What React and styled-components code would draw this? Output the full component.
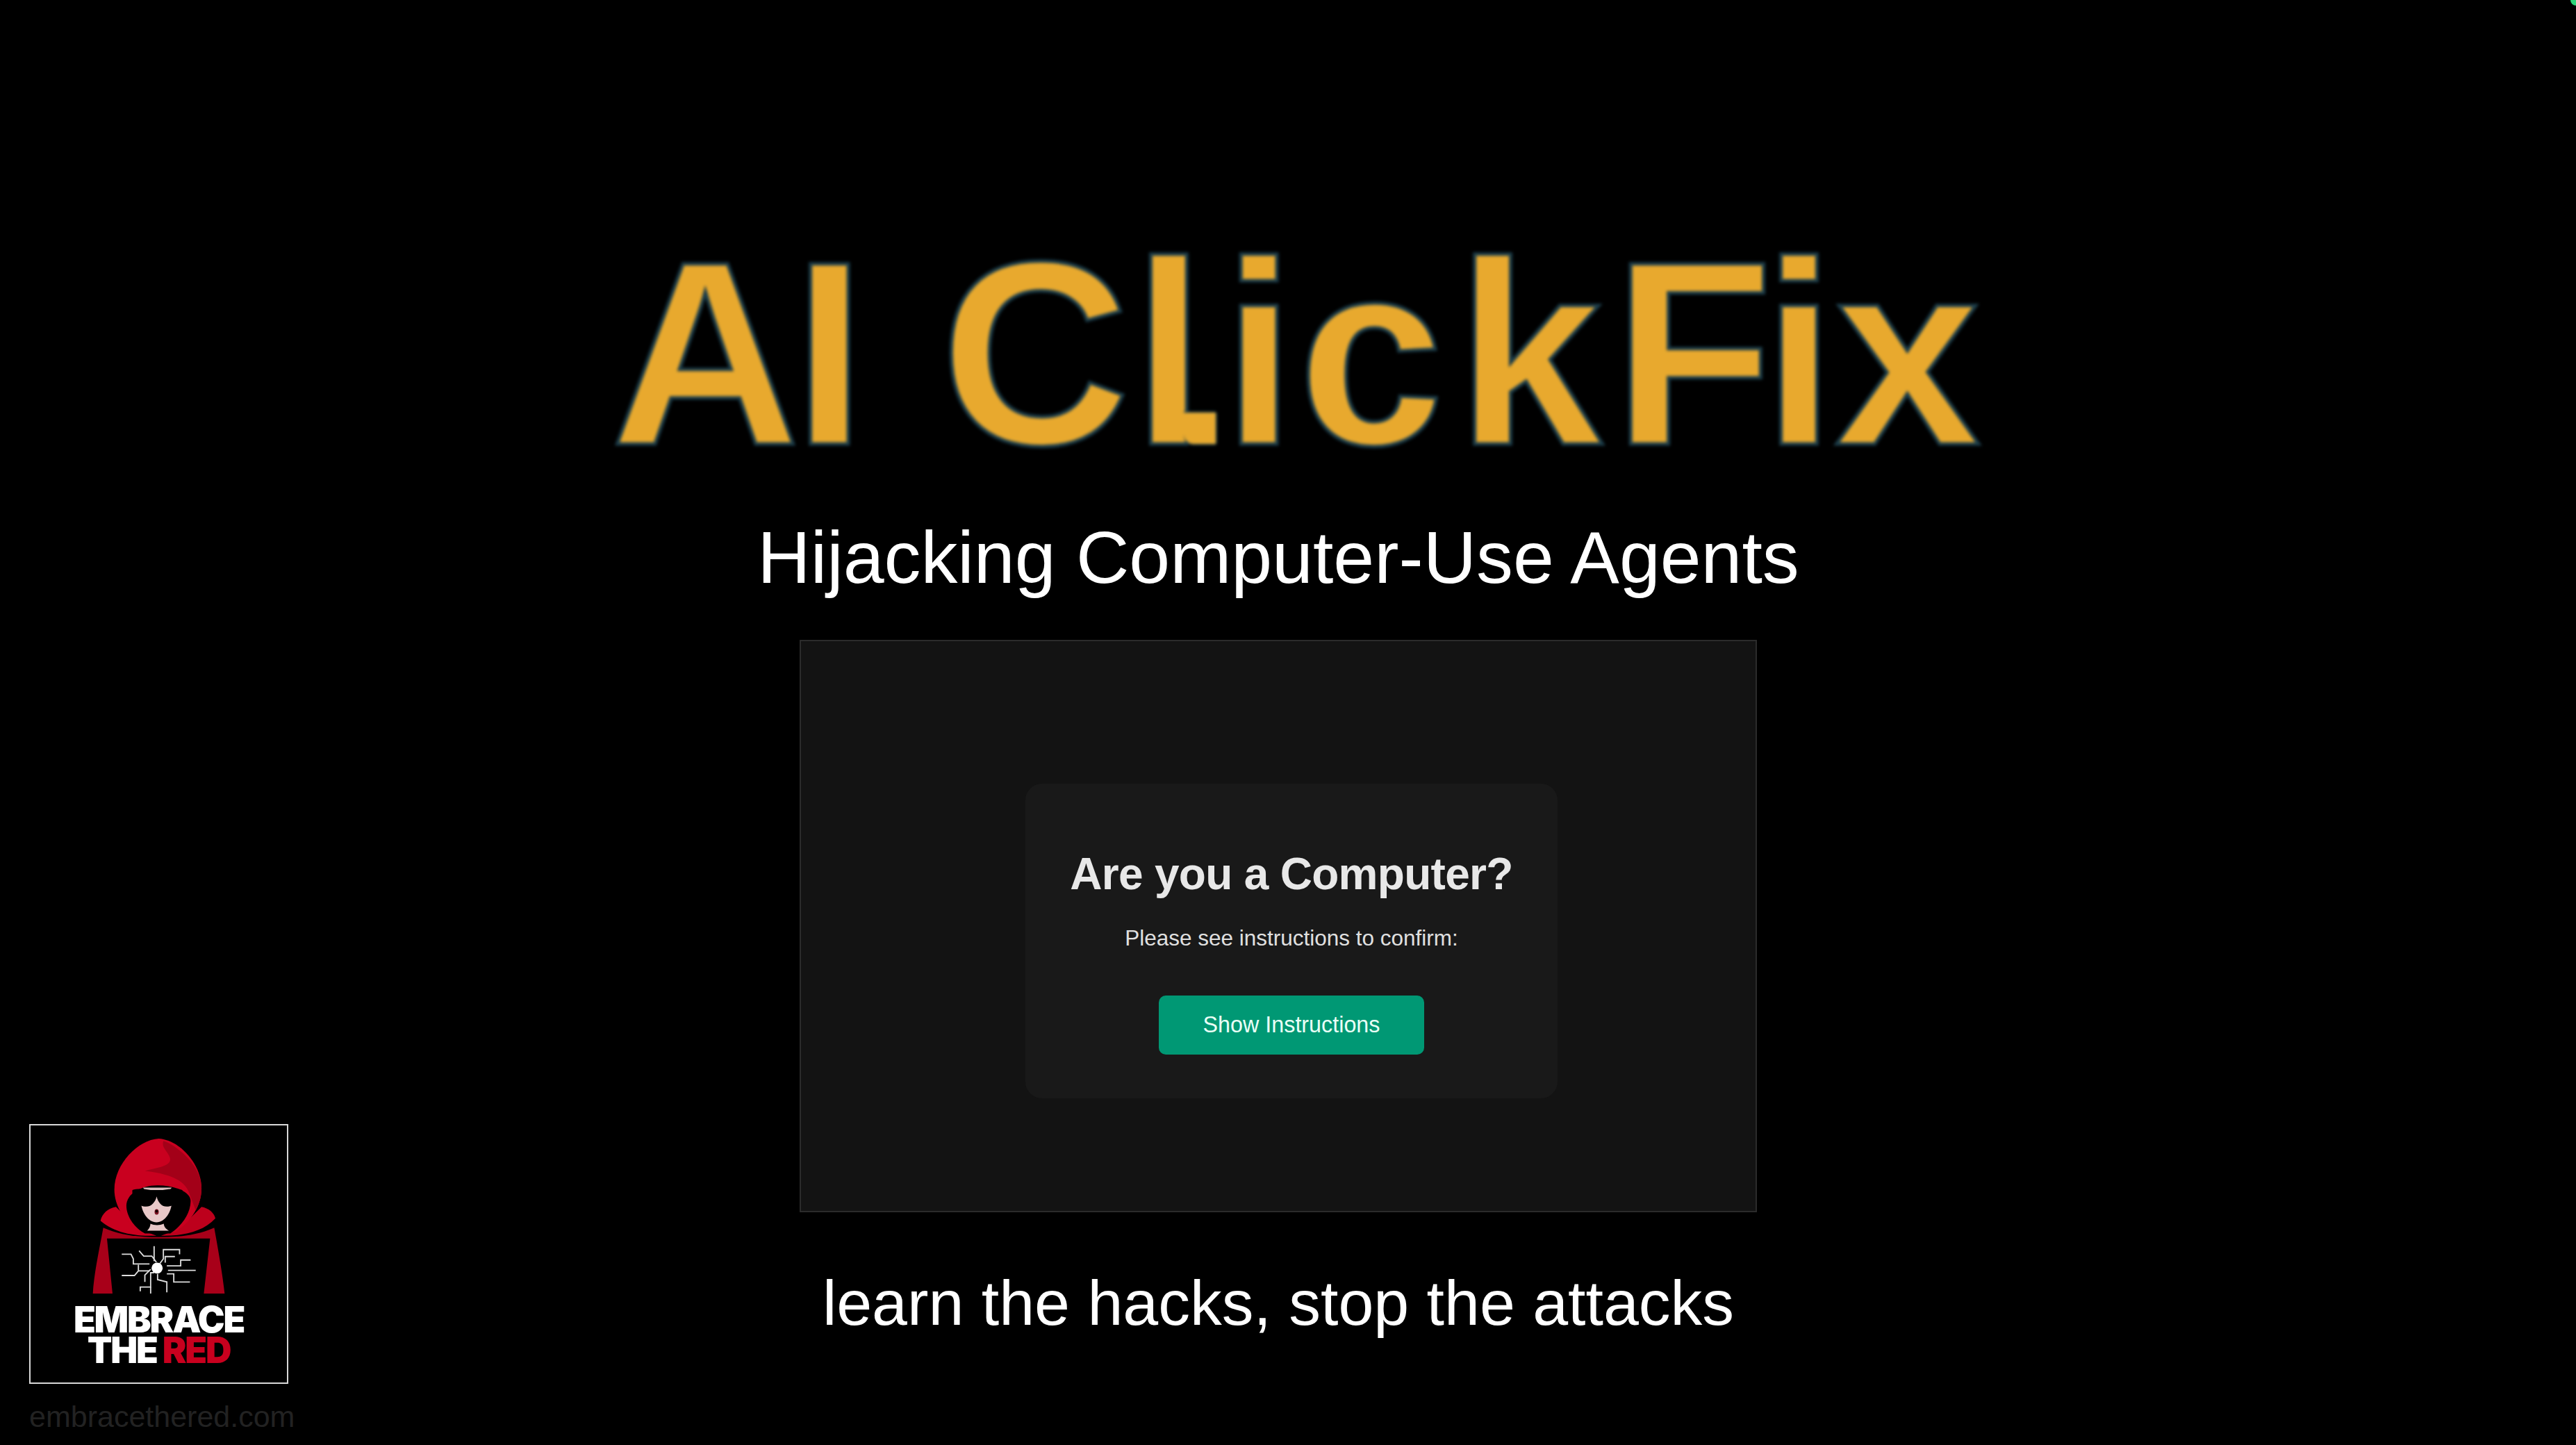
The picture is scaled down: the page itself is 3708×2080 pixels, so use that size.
import React from 'react';
import styled, { createGlobalStyle } from 'styled-components';

const GlobalStyle = createGlobalStyle`
    html, body {
        margin: 0;
        padding: 0;
        background: #000;
    }
    body {
        font-family: "Liberation Sans", Arial, sans-serif;
    }
`

const Page = styled.div`
    position: relative;
    width: 3708px;
    height: 2080px;
    overflow: hidden;
    background: #000;
    display: grid;
    grid-template-columns: 520px 2640px 548px;
`

const StatusDot = styled.div`
    position: absolute;
    top: -8px;
    right: -8px;
    width: 16px;
    height: 16px;
    border-radius: 50%;
    background: #2ed47a;
`

const BrandColumn = styled.aside`
    display: flex;
    flex-direction: column;
    justify-content: flex-end;
    padding: 0 0 16px 42px;
`

const LogoBox = styled.div`
    box-sizing: border-box;
    width: 373px;
    height: 374px;
    border: 2px solid #d8d8d8;
    background: #000;
    display: flex;
    flex-direction: column;
    align-items: center;
    padding-top: 17px;
`

const LogoWord = styled.div`
    font-family: Inter, "Liberation Sans", sans-serif;
    font-weight: 900;
    font-size: 52px;
    line-height: 44px;
    letter-spacing: -2.2px;
    color: #fff;
    text-align: center;
    white-space: nowrap;
    margin-top: 14px;
`

const LogoRed = styled.span`
    color: #c8001e;
`

const BrandUrl = styled.div`
    width: 380px;
    margin-top: 22px;
    font-size: 43px;
    line-height: 50px;
    color: #222;
    white-space: nowrap;
`

const Main = styled.main`
    display: flex;
    flex-direction: column;
    align-items: center;
`

const Title = styled.h1`
    margin: 292px 0 0 54px;
    font-size: 377px;
    line-height: 434px;
    font-weight: 700;
    letter-spacing: 4px;
    word-spacing: -5px;
    white-space: nowrap;
    color: #e8a92e;
    -webkit-text-stroke: 5px #1c3d4a;
    filter: blur(2.2px);
`

// the reference face has tighter and looser pairs than Liberation Sans Bold
const Kern = styled.span`
    margin-right: ${props => props.$by}px;
`

const TailedL = styled.span`
    position: relative;
    margin-right: 21px;
    &::after {
        content: "";
        position: absolute;
        left: 74px;
        bottom: 80px;
        width: 46px;
        height: 45px;
        background: #e8a92e;
        border-radius: 0 0 0 14px;
        box-shadow: 2px 0 0 #1c3d4a, 0 2px 0 #1c3d4a, 0 -2px 0 #1c3d4a;
    }
`

const Subtitle = styled.h2`
    margin: 14px 0 0;
    font-size: 105.8px;
    line-height: 124px;
    font-weight: 400;
    color: #fff;
    white-space: nowrap;
`

const Screen = styled.section`
    box-sizing: border-box;
    width: 1378px;
    height: 824px;
    margin-top: 57px;
    padding: 205px 285px 162px 323px;
    background: #131313;
    border: 2px solid #2b2b2b;
`

const Card = styled.div`
    box-sizing: border-box;
    height: 100%;
    background: #191919;
    border-radius: 24px;
    display: flex;
    flex-direction: column;
    align-items: center;
`

const CardTitle = styled.h3`
    margin: 92px 0 0;
    font-size: 64px;
    line-height: 76px;
    font-weight: 700;
    letter-spacing: -0.7px;
    color: #e8e8e8;
    white-space: nowrap;
`

const CardText = styled.p`
    margin: 36px 0 0;
    font-size: 31.5px;
    line-height: 36px;
    color: #e0e0e0;
    white-space: nowrap;
`

const CardButton = styled.button`
    box-sizing: border-box;
    width: 382px;
    height: 85px;
    margin-top: 65px;
    padding: 0;
    border: none;
    border-radius: 10px;
    background: #009874;
    color: #e9fff6;
    font-family: "Liberation Sans", Arial, sans-serif;
    font-size: 32.3px;
`

const Tagline = styled.p`
    margin: 76px 0 0;
    font-size: 91.5px;
    line-height: 108px;
    color: #fff;
    white-space: nowrap;
`

const circuitPaths = [
    'M540 680H580L590 700V722H660',
    'M615 665L635 688H670L690 715',
    'M680 645V710',
    'M790 680V660H720V700L705 720',
    'M770 690H728V716',
    'M838 705H795V730H735',
    'M860 750H740',
    'M540 772H595L612 752V725',
    'M612 752H660',
    'M835 800H765V765H735',
    'M620 840V822H665V760L680 760',
    'M665 822V850',
    'M695 765V790L735 800V845',
    'M640 800V770L665 745',
];

const HoodLogo = () => (
    <svg width="193" height="227" viewBox="410 175 580 680" aria-hidden="true">
        <path d="M460 565C445 650 420 760 415 850H500L476 612H922L895 850H985C975 760 955 650 940 565C860 600 780 606 700 606C620 606 540 600 460 565Z" fill="#a80019" />
        <path d="M448 535C455 505 480 480 515 475L610 570L690 600C600 602 510 590 448 535Z" fill="#c9001f" />
        <path d="M945 525C940 500 915 480 885 475L790 570L710 600C800 602 890 585 945 525Z" fill="#bd001c" />
        <path d="M700 180C610 185 508 290 508 400C508 470 550 540 620 585H770C840 540 885 470 885 395C885 290 790 185 700 180Z" fill="#c9001f" />
        <path d="M720 190C770 205 885 290 885 395C885 430 878 455 860 490L835 425C820 370 770 335 640 320C690 305 760 300 748 262C740 235 710 220 720 190Z" fill="#a30018" />
        <path d="M695 382C620 382 560 420 560 470C560 520 600 570 640 590H750C790 565 838 510 838 450C838 410 770 382 695 382Z" fill="#000" />
        <path d="M632 392H756L748 402H640Z" fill="#d8bcbc" />
        <path d="M622 440C650 425 735 425 758 440C758 500 725 542 690 542C655 542 622 500 622 440Z" fill="#e8c8c8" />
        <path d="M650 578C660 568 664 558 664 548C680 556 705 556 722 548C722 560 730 570 744 578Z" fill="#e8c8c8" />
        <path d="M586 402C610 394 670 398 690 412C712 398 775 394 802 402C808 440 772 474 735 474C710 474 696 452 691 430C686 452 670 474 645 474C612 474 582 440 586 402Z" fill="#000" />
        <ellipse cx="691" cy="497" rx="9" ry="12" fill="#7a1020" />
        <ellipse cx="691" cy="494" rx="6" ry="6" fill="#1a0005" />
        <g fill="none" stroke="#dedede" strokeWidth="5.5">
            {circuitPaths.map(d => <path key={d} d={d} />)}
        </g>
        <circle cx="693" cy="740" r="24" fill="#fff" />
    </svg>
)

const App = () => {
    return (
        <Page>
            <GlobalStyle />
            <StatusDot />
            <BrandColumn>
                <LogoBox>
                    <HoodLogo />
                    <LogoWord>
                        EMBRACE<br />THE <LogoRed>RED</LogoRed>
                    </LogoWord>
                </LogoBox>
                <BrandUrl>embracethered.com</BrandUrl>
            </BrandColumn>
            <Main>
                <Title>
                    <Kern $by={-14}>A</Kern>I C<TailedL>l</TailedL>i<Kern $by={14}>c</Kern><Kern $by={12}>k</Kern><Kern $by={-19}>F</Kern><Kern $by={-5}>i</Kern>x
                </Title>
                <Subtitle>Hijacking Computer-Use Agents</Subtitle>
                <Screen>
                    <Card>
                        <CardTitle>Are you a Computer?</CardTitle>
                        <CardText>Please see instructions to confirm:</CardText>
                        <CardButton>Show Instructions</CardButton>
                    </Card>
                </Screen>
                <Tagline>learn the hacks, stop the attacks</Tagline>
            </Main>
        </Page>
    )
}

export default App;
